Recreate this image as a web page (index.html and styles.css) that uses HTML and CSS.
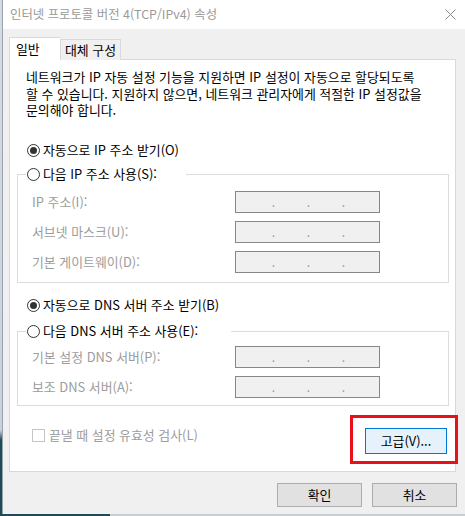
FILE: index.html
```html
<!DOCTYPE html>
<html lang="ko">
<head>
<meta charset="utf-8">
<title>인터넷 프로토콜 버전 4(TCP/IPv4) 속성</title>
<link rel="stylesheet" href="styles.css">
</head>
<body>
<div class="screen">
  <div class="desk-strip"></div>
  <div class="dialog">
    <div class="titlebar">
      <span class="title">인터넷 프로토콜 버전 4(TCP/IPv4) 속성</span>
      <svg class="close" width="11" height="11" viewBox="0 0 11 11"><path d="M0.5 0.5 L10.5 10.5 M10.5 0.5 L0.5 10.5" stroke="#8a8a8a" stroke-width="1" fill="none"/></svg>
    </div>
    <div class="dialog-body">
      <div class="tabs">
        <div class="tab tab-active">일반</div>
        <div class="tab">대체 구성</div>
      </div>
      <div class="panel">
        <p class="intro">네트워크가 IP 자동 설정 기능을 지원하면 IP 설정이 자동으로 할당되도록<br>할 수 있습니다. 지원하지 않으면, 네트워크 관리자에게 적절한 IP 설정값을<br>문의해야 합니다.</p>

        <div class="radio-row radio-first"><span class="radio checked"></span><span>자동으로 IP 주소 받기(O)</span></div>

        <fieldset class="group group-ip">
          <legend class="legend legend-ip"><span class="radio"></span><span>다음 IP 주소 사용(S):</span></legend>
          <div class="fields">
            <span class="field-label">IP 주소(I):</span>
            <div class="ip"><span>.</span><span>.</span><span>.</span></div>
            <span class="field-label">서브넷 마스크(U):</span>
            <div class="ip"><span>.</span><span>.</span><span>.</span></div>
            <span class="field-label">기본 게이트웨이(D):</span>
            <div class="ip"><span>.</span><span>.</span><span>.</span></div>
          </div>
        </fieldset>

        <div class="radio-row radio-dns"><span class="radio checked"></span><span>자동으로 DNS 서버 주소 받기(B)</span></div>

        <fieldset class="group group-dns">
          <legend class="legend legend-dns"><span class="radio"></span><span>다음 DNS 서버 주소 사용(E):</span></legend>
          <div class="fields">
            <span class="field-label">기본 설정 DNS 서버(P):</span>
            <div class="ip"><span>.</span><span>.</span><span>.</span></div>
            <span class="field-label">보조 DNS 서버(A):</span>
            <div class="ip"><span>.</span><span>.</span><span>.</span></div>
          </div>
        </fieldset>

        <div class="bottom-row">
          <div class="check-row"><span class="checkbox"></span><span>끝낼 때 설정 유효성 검사(L)</span></div>
          <div class="advanced-wrap">
            <button class="btn btn-advanced">고급(V)...</button>
            <span class="highlight"></span>
          </div>
        </div>
      </div>
      <div class="footer">
        <button class="btn">확인</button>
        <button class="btn">취소</button>
      </div>
    </div>
  </div>
</div>
<div class="desk-bottom"><span class="desk-dark"></span></div>
</body>
</html>
```

FILE: styles.css
```css
* { box-sizing: border-box; }

html, body {
  margin: 0;
  padding: 0;
}

body {
  width: 465px;
  height: 516px;
  overflow: hidden;
  background: #f0f0f0;
  font-family: "Noto Sans CJK KR", "Noto Sans", sans-serif;
  font-size: 12.9px;
  color: #000;
}

.screen {
  display: flex;
  height: 514px;
}

.desk-strip {
  width: 2px;
  flex: none;
  background: linear-gradient(#d5dbe2 0, #c9d2dc 430px, #1d4b58 440px, #1d4b58 100%);
}

.dialog {
  flex: 1;
  border-left: 1px solid #9aa3ab;
  display: flex;
  flex-direction: column;
  background: #f0f0f0;
}

.titlebar {
  height: 29px;
  background: #fff;
  display: flex;
  align-items: center;
  justify-content: space-between;
  padding: 0 9px 2px 7px;
}

.title {
  color: #9a9a9a;
  font-size: 12.4px;
  line-height: 16px;
}

.close { display: block; margin-top: 1px; }

.dialog-body {
  padding: 8px 0 0 6px;
}

.tabs {
  display: flex;
  align-items: flex-end;
  height: 23px;
  position: relative;
  z-index: 1;
  margin-bottom: -1px;
}

.tab {
  height: 21px;
  padding: 0 3px;
  width: 61px;
  line-height: 19px;
  border: 1px solid #d9d9d9;
  border-bottom: none;
  background: #f0f0f0;
  text-align: center;
  white-space: nowrap;
}

.tab-active {
  width: 51px;
  height: 24px;
  background: #fff;
  border-right: none;
  text-align: left;
  padding-left: 6px;
  line-height: 21px;
  margin-bottom: -1px;
}

.panel {
  width: 447px;
  height: 413px;
  background: #fff;
  border: 1px solid #d9d9d9;
  padding: 9px 6px 0 7px;
  display: flex;
  flex-direction: column;
}

.intro {
  margin: 0;
  padding-left: 9px;
  line-height: 16.5px;
  white-space: nowrap;
}

.radio-row {
  display: flex;
  align-items: center;
  height: 16px;
  line-height: 16px;
  padding-left: 10px;
  gap: 3px;
}

.radio-first { margin-top: 23.5px; }
.radio-dns { margin-top: 14px; }

.radio {
  width: 13px;
  height: 13px;
  border: 1px solid #333;
  border-radius: 50%;
  background: #fff;
  flex: none;
  position: relative;
}

.radio.checked::after {
  content: "";
  position: absolute;
  left: 2px;
  top: 2px;
  width: 7px;
  height: 7px;
  border-radius: 50%;
  background: #333;
}

.group {
  margin: 0;
  min-width: 0;
  border: 1px solid #dcdcdc;
  padding: 9px 0 9px 14px;
}

.group-ip { margin-top: 8px; }
.group-dns { margin-top: 10px; padding-top: 7px; padding-bottom: 7px; }

.legend {
  display: flex;
  align-items: center;
  gap: 3px;
  height: 16px;
  line-height: 16px;
  padding: 0 0 0 1px;
  margin-left: -6px;
  background: #fff;
  white-space: nowrap;
}

.legend-ip { width: 160px; }
.legend-dns { width: 205px; }

.fields {
  display: grid;
  grid-template-columns: 203px 145px;
  row-gap: 8px;
  align-items: center;
}

.field-label {
  color: #9c9c9c;
  line-height: 16px;
}

.ip {
  height: 22px;
  border: 1px solid #878787;
  background: #f0f0f0;
  display: flex;
  padding-left: 20px;
  line-height: 20px;
  font-size: 12px;
  color: #9c9c9c;
}

.ip span {
  width: 35px;
  text-align: center;
}

.bottom-row {
  margin-top: 22px;
  display: flex;
  justify-content: space-between;
  align-items: flex-start;
  padding-right: 2px;
}

.check-row {
  display: flex;
  align-items: center;
  gap: 4px;
  margin-left: 15px;
  height: 14px;
  color: #9c9c9c;
  line-height: 14px;
}

.checkbox {
  width: 13px;
  height: 13px;
  border: 1px solid #c4c4c4;
  background: #fff;
  flex: none;
}

.advanced-wrap {
  position: relative;
}

.btn {
  font-family: inherit;
  font-size: 12.9px;
  color: #000;
  width: 85px;
  height: 24px;
  background: #e1e1e1;
  border: 1px solid #adadad;
  padding: 0;
  line-height: 20px;
}

.btn-advanced {
  display: block;
  width: 82px;
  height: 26px;
  background: #e5f1fb;
  border-color: #0078d7;
}

.highlight {
  position: absolute;
  left: -15px;
  top: -13px;
  right: -11px;
  bottom: -10px;
  border: 3px solid #e8101a;
  pointer-events: none;
}

.footer {
  display: flex;
  justify-content: flex-end;
  gap: 10px;
  margin-top: 11px;
  padding-right: 8px;
}

.desk-bottom {
  height: 2px;
  background: #c9ccd0;
  display: flex;
}

.desk-dark {
  width: 110px;
  background: #1d4b58;
}
```
